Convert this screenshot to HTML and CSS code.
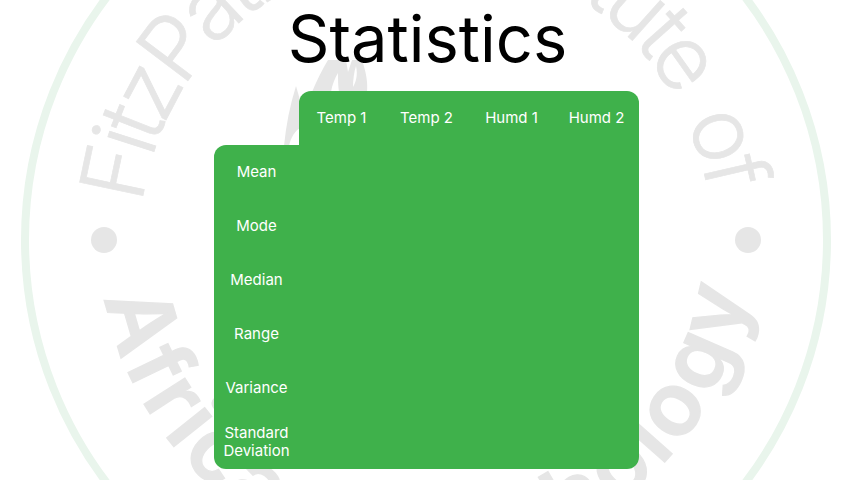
FILE: index.html
```html
<!DOCTYPE html>
<html lang="en">
<head>
<meta charset="utf-8">
<title>Statistics</title>
<link rel="stylesheet" href="styles.css">
</head>
<body>
<svg class="watermark" viewBox="0 0 854 480" aria-hidden="true">
  <defs>
    <path id="arc-top" d="M 140 240 A 286 286 0 0 1 712 240"/>
    <path id="arc-bottom" d="M 100 240 A 326 326 0 0 0 752 240"/>
  </defs>
  <circle class="ring" cx="426" cy="240" r="401"/>
  <circle class="dot" cx="104" cy="240" r="13"/>
  <circle class="dot" cx="748" cy="240" r="13"/>
  <path class="dot" fill-rule="evenodd" d="M296 86 C290 105 286 125 284 146 L289 146 C291 137 295 131 300 128 L300 100 Z M312 92 C316 82 322 70 328 60 L346 60 L348 72 L352 60 L362 60 C366 72 368 82 367 92 Z M331 92 C332 85 335 78 338 73 C338 80 338 86 339 92 Z M356 66 C354 72 353 80 353 87 C356 82 358 75 356 66 Z"/>
  <text class="wm-top"><textPath href="#arc-top" startOffset="36">FitzPatrick</textPath></text>
  <text class="wm-top wm-end"><textPath href="#arc-top" startOffset="846">Institute<tspan dx="10"> of</tspan></textPath></text>
  <text class="wm-bottom"><textPath href="#arc-bottom" startOffset="58">African</textPath></text>
  <text class="wm-bottom wm-end"><textPath href="#arc-bottom" startOffset="977">Ornithology</textPath></text>
</svg>
<main class="page">
  <h1 class="title">Statistics</h1>
  <div class="stats">
    <div class="corner"></div>
    <div class="cell head first">Temp 1</div>
    <div class="cell head">Temp 2</div>
    <div class="cell head">Humd 1</div>
    <div class="cell head last">Humd 2</div>
    <div class="cell side top">Mean</div><div class="cell"></div><div class="cell"></div><div class="cell"></div><div class="cell"></div>
    <div class="cell side">Mode</div><div class="cell"></div><div class="cell"></div><div class="cell"></div><div class="cell"></div>
    <div class="cell side">Median</div><div class="cell"></div><div class="cell"></div><div class="cell"></div><div class="cell"></div>
    <div class="cell side">Range</div><div class="cell"></div><div class="cell"></div><div class="cell"></div><div class="cell"></div>
    <div class="cell side">Variance</div><div class="cell"></div><div class="cell"></div><div class="cell"></div><div class="cell"></div>
    <div class="cell side bottom-left">Standard Deviation</div><div class="cell"></div><div class="cell"></div><div class="cell"></div><div class="cell bottom-right"></div>
  </div>
</main>
</body>
</html>
```
FILE: styles.css
```css
html, body { margin: 0; height: 100%; }
body {
  position: relative;
  width: 854px;
  height: 480px;
  overflow: hidden;
  background: #fff;
  font-family: Inter, "Liberation Sans", sans-serif;
}
.watermark { position: absolute; left: 0; top: 0; width: 854px; height: 480px; }
.ring { fill: none; stroke: #e9f5ec; stroke-width: 8; }
.dot { fill: #e6e6e6; }
.wm-top { fill: #e6e6e6; stroke: #e6e6e6; stroke-width: 0.7; font-size: 89px; font-weight: 300; letter-spacing: -6px; }
.wm-bottom { fill: #e6e6e6; stroke: #e6e6e6; stroke-width: 1.2; font-size: 89px; font-weight: 600; letter-spacing: 4.5px; }
.wm-end { text-anchor: end; }
.page {
  position: relative;
  width: 853px;
  display: flex;
  flex-direction: column;
  align-items: center;
}
.title {
  margin: 0;
  padding-left: 2px;
  height: 91px;
  font-size: 65px;
  font-weight: 400;
  line-height: 77px;
  color: #000;
}
.stats {
  display: grid;
  grid-template-columns: repeat(5, 85px);
  grid-auto-rows: 54px;
}
.cell {
  display: flex;
  align-items: center;
  justify-content: center;
  text-align: center;
  background: #3fb14b;
  color: #fff;
  font-size: 15px;
  line-height: 18px;
}
.first { border-top-left-radius: 12px; }
.last { border-top-right-radius: 12px; }
.top { border-top-left-radius: 12px; }
.bottom-left { border-bottom-left-radius: 12px; }
.bottom-right { border-bottom-right-radius: 12px; }
```
